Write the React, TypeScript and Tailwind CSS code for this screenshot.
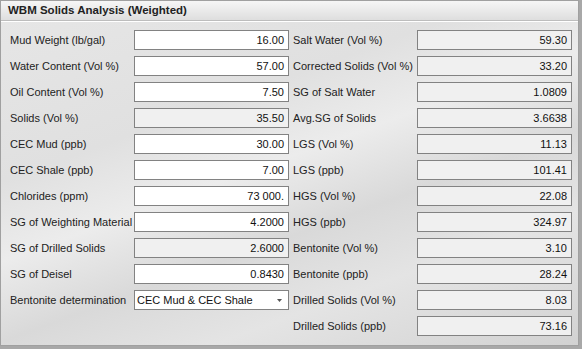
type Field = { label: string; value: string; kind: "edit" | "read" | "select" };

const left: Field[] = [
  { label: "Mud Weight (lb/gal)", value: "16.00", kind: "edit" },
  { label: "Water Content (Vol %)", value: "57.00", kind: "edit" },
  { label: "Oil Content (Vol %)", value: "7.50", kind: "edit" },
  { label: "Solids (Vol %)", value: "35.50", kind: "read" },
  { label: "CEC Mud (ppb)", value: "30.00", kind: "edit" },
  { label: "CEC Shale (ppb)", value: "7.00", kind: "edit" },
  { label: "Chlorides (ppm)", value: "73 000.", kind: "edit" },
  { label: "SG of Weighting Material", value: "4.2000", kind: "edit" },
  { label: "SG of Drilled Solids", value: "2.6000", kind: "read" },
  { label: "SG of Deisel", value: "0.8430", kind: "edit" },
  { label: "Bentonite determination", value: "CEC Mud & CEC Shale", kind: "select" },
];

const right: Field[] = [
  { label: "Salt Water (Vol %)", value: "59.30", kind: "read" },
  { label: "Corrected Solids (Vol %)", value: "33.20", kind: "read" },
  { label: "SG of Salt Water", value: "1.0809", kind: "read" },
  { label: "Avg.SG of Solids", value: "3.6638", kind: "read" },
  { label: "LGS (Vol %)", value: "11.13", kind: "read" },
  { label: "LGS (ppb)", value: "101.41", kind: "read" },
  { label: "HGS (Vol %)", value: "22.08", kind: "read" },
  { label: "HGS (ppb)", value: "324.97", kind: "read" },
  { label: "Bentonite (Vol %)", value: "3.10", kind: "read" },
  { label: "Bentonite (ppb)", value: "28.24", kind: "read" },
  { label: "Drilled Solids (Vol %)", value: "8.03", kind: "read" },
  { label: "Drilled Solids (ppb)", value: "73.16", kind: "read" },
];

function Box({ f }: { f: Field }) {
  if (f.kind === "select") {
    return (
      <div className="h-[20px] flex items-center border border-[#828282] bg-white pl-[2px] pr-[6px]">
        <span className="flex-1 text-[#111]">{f.value}</span>
        <svg width="5" height="3" viewBox="0 0 5 3"><path d="M0 0h5L2.5 3z" fill="#555" /></svg>
      </div>
    );
  }
  return (
    <div
      className={`h-[20px] flex items-center justify-end border border-[#828282] pr-[4px] text-[#111] ${
        f.kind === "read" ? "bg-[#f0f0f0]" : "bg-white"
      }`}
    >
      {f.value}
    </div>
  );
}

function Column({ fields }: { fields: Field[] }) {
  return (
    <div className="flex flex-col gap-[6px]">
      {fields.map((f) => (
        <div key={f.label} className="flex items-center">
          <span className="w-[124px] shrink-0 text-[#222]">{f.label}</span>
          <div className="w-[155px]">
            <Box f={f} />
          </div>
        </div>
      ))}
    </div>
  );
}

export default function App() {
  return (
    <div
      className="w-[582px] h-[349px] bg-[#a8a8a8] text-[11px] leading-none"
      style={{ fontFamily: '"Liberation Sans", Arial, sans-serif' }}
    >
      <div className="w-[579px] h-[346px] border border-[#a0a0a0] flex flex-col bg-[#d6d6d6]">
        {/* header */}
        <div className="h-[20px] shrink-0 flex items-center pl-[7px] font-bold text-[11.5px] text-[#222] bg-[linear-gradient(#f6f6f6,#dedede)] border-b border-[#bdbdbd]">
          WBM Solids Analysis (Weighted)
        </div>
        {/* body */}
        <div className="flex-1 border-t border-white bg-[linear-gradient(160deg,#e6e6e6_0%,#e0e0e0_30%,#ececec_45%,#d9d9d9_60%,#e4e4e4_75%,#d2d2d2_100%)] pt-[8px] pl-[9px] flex gap-[4px]">
          <Column fields={left} />
          <Column fields={right} />
        </div>
      </div>
    </div>
  );
}
